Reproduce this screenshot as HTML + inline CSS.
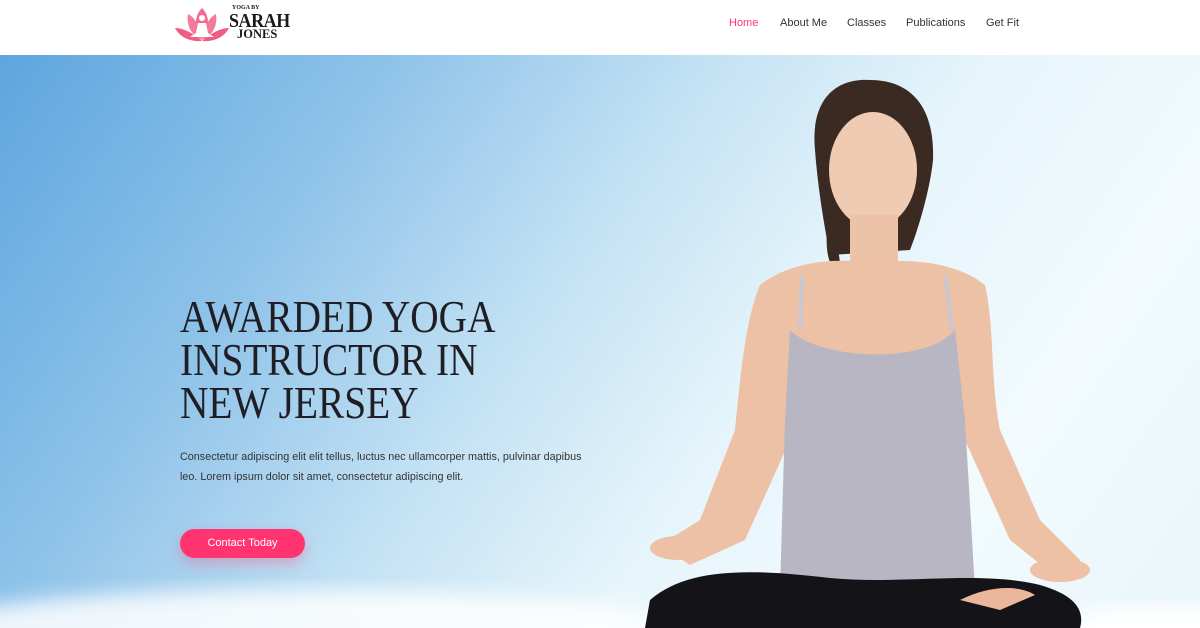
<!DOCTYPE html>
<html><head><meta charset="utf-8"><style>
*{margin:0;padding:0;box-sizing:border-box}
html,body{width:1200px;height:628px;overflow:hidden}
body{font-family:"Liberation Sans",sans-serif;background:#fff;position:relative}
header{position:absolute;top:0;left:0;width:1200px;height:55px;background:#fff;z-index:5}
nav a{position:absolute;top:17px;font-size:11px;color:#333;text-decoration:none}
.hero{position:absolute;top:55px;left:0;width:1200px;height:573px;overflow:hidden;
background:linear-gradient(125deg,#5ea6de 0%,#8fc3e9 25%,#c4e2f4 45%,#e6f5fb 62%,#f2fafd 80%,#eaf6fb 100%)}
h1{position:absolute;left:180px;top:240px;font-family:"Liberation Serif",serif;font-weight:400;font-size:46px;line-height:43px;color:#1e1e24;transform:scaleX(.855);transform-origin:left top;white-space:nowrap}
p{position:absolute;left:180px;top:393px;width:420px;font-size:10.8px;line-height:19.5px;color:#333}
.btn{position:absolute;left:180px;top:474px;width:125px;height:29px;border-radius:15px;background:#ff3471;color:#fff;font-size:11px;text-align:center;line-height:29px;box-shadow:0 6px 14px rgba(255,52,113,.3)}
</style></head><body>
<header>
<svg style="position:absolute;left:174px;top:4px" width="56" height="40" viewBox="0 0 56 40">
<path d="M28 4C20 12 20 24 28 34C36 24 36 12 28 4Z" fill="#f26b92"/>
<path d="M14 10C12 22 18 32 28 36C26 24 22 14 14 10Z" fill="#f47a9c"/>
<path d="M42 10C44 22 38 32 28 36C30 24 34 14 42 10Z" fill="#f47a9c"/>
<path d="M1 24C6 34 18 38 28 37C20 30 10 24 1 24Z" fill="#ef5d87"/>
<path d="M55 24C50 34 38 38 28 37C36 30 46 24 55 24Z" fill="#ef5d87"/>
<circle cx="28" cy="14" r="3" fill="#fff"/>
<path d="M24 19h8l2 10 6 4h-24l6-4z" fill="#fff"/>
</svg>
<div style="position:absolute;left:229px;top:5px;font-family:'Liberation Serif',serif;font-weight:bold;color:#1a1a1a;line-height:1">
<div style="font-size:6px;margin-left:3px">YOGA BY</div>
<div style="font-size:20px;letter-spacing:-.5px;transform:scaleX(.9);transform-origin:left">SARAH</div>
<div style="font-size:12.5px;margin-left:8px;margin-top:-3px">JONES</div></div>
<nav>
<a style="left:729px;color:#ff3471">Home</a>
<a style="left:780px">About Me</a>
<a style="left:847px">Classes</a>
<a style="left:906px">Publications</a>
<a style="left:986px">Get Fit</a>
</nav>
</header>
<div class="hero">
<svg style="position:absolute;left:0;top:0" width="1200" height="573" viewBox="0 55 1200 573">
<defs><filter id="b"><feGaussianBlur stdDeviation="10"/></filter></defs>
<ellipse cx="300" cy="640" rx="420" ry="50" fill="#fff" opacity=".85" filter="url(#b)"/>
<ellipse cx="1160" cy="630" rx="100" ry="25" fill="#fff" filter="url(#b)"/>
<path d="M815 150C810 95 840 78 870 80C905 80 935 100 933 160C930 190 918 230 910 250L830 255C825 230 818 190 815 150Z" fill="#3a2a22"/>
<path d="M830 200C826 230 825 250 830 262L840 262Z" fill="#3a2a22"/>
<ellipse cx="873" cy="170" rx="44" ry="58" fill="#f0cbb3"/>
<path d="M850 215h48v50h-48z" fill="#ecc2a8"/>
<path d="M760 285C790 262 830 258 873 262C920 258 960 265 985 285C995 330 990 380 1000 430L1040 520 1080 560 1060 580 1010 540 965 440 790 440 745 540 690 565 660 545 700 520 735 430C740 380 745 320 760 285Z" fill="#edc1a5"/>
<path d="M790 330C820 360 925 365 955 330L965 420 975 590H780L785 420Z" fill="#b9b6c4"/>
<path d="M802 275L800 330M945 275L952 330" stroke="#c9c7d2" stroke-width="4"/>
<path d="M650 600C690 565 760 570 830 578C900 585 980 570 1040 585C1075 595 1085 610 1080 628H645Z" fill="#141418"/>
<path d="M960 600C990 585 1020 585 1035 595L1000 610Z" fill="#eab79d"/>
<ellipse cx="678" cy="548" rx="28" ry="12" fill="#eec1a6"/>
<ellipse cx="1060" cy="570" rx="30" ry="12" fill="#eec1a6"/>
</svg>
<h1>AWARDED YOGA<br>INSTRUCTOR IN<br>NEW JERSEY</h1>
<p>Consectetur adipiscing elit elit tellus, luctus nec ullamcorper mattis, pulvinar dapibus leo. Lorem ipsum dolor sit amet, consectetur adipiscing elit.</p>
<div class="btn">Contact Today</div>
</div>
</body></html>
